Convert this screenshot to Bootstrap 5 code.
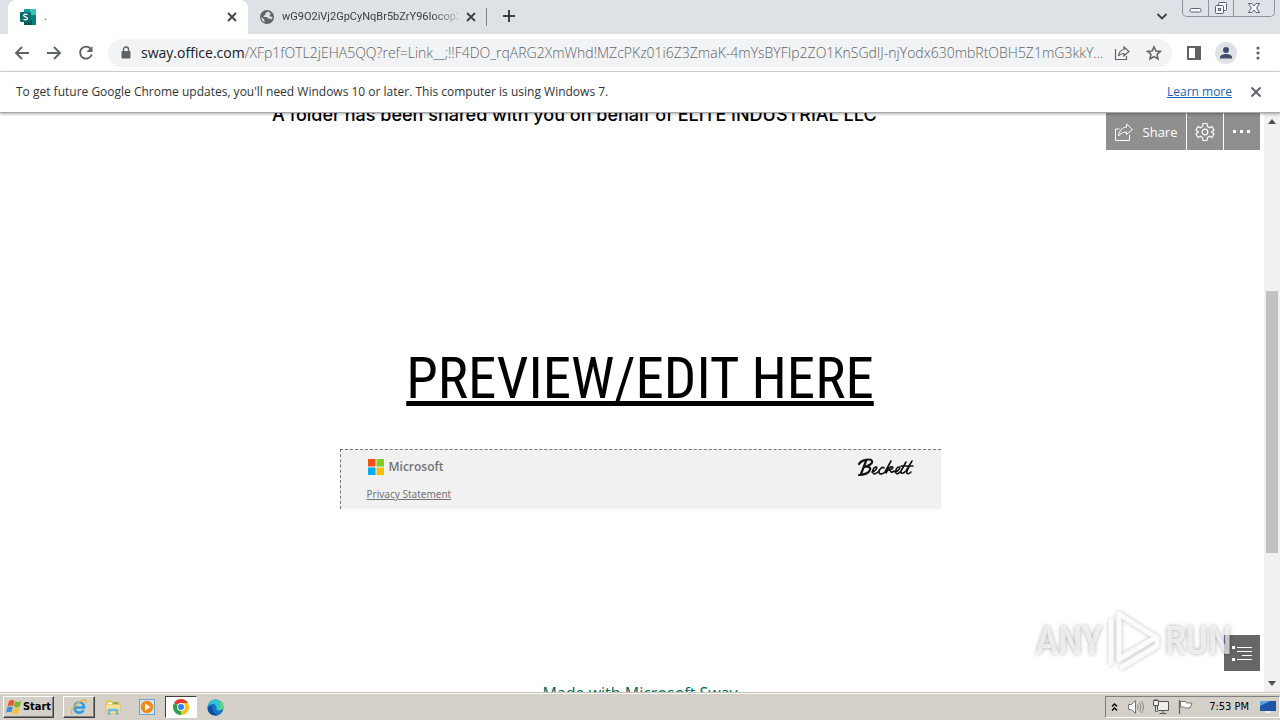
<!DOCTYPE html>
<html lang="en">
<head>
<meta charset="utf-8">
<meta name="viewport" content="width=device-width, initial-scale=1">
<title>Sway</title>
<link href="https://cdn.jsdelivr.net/npm/bootstrap@5.3.0/dist/css/bootstrap.min.css" rel="stylesheet">
<style>
  :root { --ui: "DejaVu Sans Condensed", "DejaVu Sans", sans-serif; --narrow: "Roboto Condensed", "Open Sans Condensed", Roboto, sans-serif; }
  body { font-family: "Open Sans", sans-serif; font-size: 12px; line-height: 16px; color: #222; background: #fff; }
  svg { display: block; flex: none; }
  button { font: inherit; color: inherit; }
  .plain { border: 0; background: none; padding: 0; display: flex; align-items: center; justify-content: center; flex: none; }
  /* tab strip */
  .tabstrip { height: 34px; background: #dee1e6; color: #3c4043; padding-left: 8px; }
  .tab { width: 240px; padding: 0 10px 0 12px; gap: 8px; font-family: Roboto, sans-serif; font-size: 11px; }
  .tab-on { background: #fff; border-radius: 8px 8px 0 0; }
  .tab-off { padding: 0 9px 0 11px; width: 239px; border-right: 1px solid #80868b; height: 18px; margin-top: 8px; gap: 7px; }
  .fade-name { overflow: hidden; white-space: nowrap; -webkit-mask-image: linear-gradient(90deg, #000 85%, #0003); mask-image: linear-gradient(90deg, #000 85%, #0003); }
  .tool { width: 32px; height: 32px; color: #5f6368; }
  .winbtns { height: 17px; margin-right: 5px; border: 1px solid #8d93a5; border-top: 0; border-radius: 0 0 5px 5px; overflow: hidden; }
  .winbtns button { width: 25px; }
  .winbtns button + button { border-left: 1px solid #8d93a5; }
  .winbtns button:last-child { width: 41px; }
  /* toolbar */
  .toolbar { height: 38px; padding: 0 6px; border-bottom: 1px solid #d5d7da; }
  .omnibox { height: 28px; margin: 0 6px; border-radius: 14px; background: #f1f3f4; padding: 0 2px 0 12px; font-size: 14px; }
  .omnibox label { color: #202124; margin-left: 9px; }
  .omnibox input { border: 0; background: none; padding: 0; outline: 0; color: #5f6368; font-weight: 300; min-width: 0; text-overflow: ellipsis; }
  .infobar { height: 41px; padding: 0 8px 0 16px; border-bottom: 1px solid #a8a8a8; box-shadow: 0 1px 3px #0005; position: relative; z-index: 3; background: #fff; color: #303336; font-size: 12px; }
  .infobar a { color: #1a62b8; }
  /* document */
  .stage { min-height: 0; overflow: hidden; position: relative; }
  .sheet { max-width: 736px; margin: -10px auto 0; color: #000; }
  .shared { font: 500 18px/24px Inter, sans-serif; margin: 0; }
  .cta { font: 57px/64px var(--narrow); color: #000; margin-top: 220px; text-decoration-thickness: 5px; text-underline-offset: 3px; }
  .legal { width: 601px; height: 60px; margin-top: 38px; background: #f1f1f1; border: dashed #777; border-width: 1px 0 0 1px; padding: 8px 26px; }
  .ms { font: 600 12px/18px "Open Sans", sans-serif; color: #737373; gap: 4px; }
  .privacy { font: 10px/14px "Noto Sans", sans-serif; color: #737373; margin-top: 11px; }
  .made { font: 16px/24px "Open Sans", sans-serif; color: #00695f; margin: 172px 0 0; }
  .quick { top: 0; right: 20px; gap: 1px; }
  .quick button { height: 37px; width: 36px; background: #8f8f8f; color: #fff; font: 13px/16px "Open Sans", sans-serif; }
  .quick .wide { width: 80px; gap: 10px; }
  .sb { top: 0; right: 0; bottom: 0; width: 16px; background: #f1f1f1; color: #505050; padding: 6px 0; }
  .thumb { width: 12px; height: 47%; background: #c1c1c1; }
  .toc { right: 20px; bottom: 21px; width: 36px; height: 36px; background: #666; color: #fff; }
  .mark-any { right: 48px; bottom: 19px; gap: 3px; font: 500 39px/64px var(--narrow); color: #ffffffb3; text-shadow: 0 0 4px #0005; }
  .mark-any svg { filter: drop-shadow(0 0 2px #0004); }
  /* taskbar */
  .taskbar { height: 28px; background: #d4d0c8; border-top: 1px solid #c4c0b0; box-shadow: inset 0 1px #fff; padding: 3px 0 0 3px; font-family: var(--ui); font-size: 11px; color: #000; z-index: 4; }
  .tb { width: 32px; height: 22px; }
  .raised { border: 1px solid; border-color: #fff #404040 #404040 #fff; box-shadow: inset -1px -1px #808080; }
  .sunk { border: 1px solid; border-color: #404040 #fff #fff #404040; background: #fff; }
  .start { width: 51px; height: 22px; font-weight: 700; gap: 0; margin-right: 9px; }
  .tray { height: 22px; border: 1px solid; border-color: #808080 #fff #fff #808080; padding: 0 3px 0 4px; }
</style>
</head>
<body class="vh-100 d-flex flex-column overflow-hidden">
<header class="flex-shrink-0">
  <div class="tabstrip d-flex">
    <div class="tab tab-on d-flex align-items-center">
      <svg width="16" height="16" viewBox="0 0 16 16"><path fill="#37c6b4" d="M4 0h12v6H4z"/><path fill="#1a9ba1" d="M4 0h6v8H4z"/><path fill="#0c7d83" d="M4 6h12v10H4z"/><path fill="#03545c" d="M4 11h8v5H4z"/><rect y="3" width="11" height="10" rx="1" fill="#036c70"/><path d="M7.6 5.6C6 4.8 3.700 5 3.700 6.500s3.800 1.100 3.800 2.900c0 1.500-2.500 1.700-4 .8" fill="none" stroke="#fff" stroke-width="1.300"/></svg>
      <span class="flex-grow-1">.</span>
      <button class="plain" aria-label="Close tab"><svg width="12" height="12" viewBox="0 0 12 12"><path d="m2 2 8 8m0-8-8 8" stroke="#3c4043" stroke-width="1.800"/></svg></button>
    </div>
    <div class="tab tab-off d-flex align-items-center">
      <svg width="16" height="16" viewBox="0 0 16 16"><circle cx="8" cy="8" r="7" fill="#5f6368"/><path fill="#dee1e6" d="M9 2.600 6.500 4v1.500L4.500 7v1h3.500l1 1.500h1.500l1.500 1 1.500-1.500v-1L11 7.500 10.500 6l1.500-1.500zM2.200 8l3 2.500.5 3A6 6 0 0 1 2.200 8z"/></svg>
      <span class="fade-name flex-grow-1">wG9O2iVj2GpCyNqBr5bZrY96Iocop3</span>
      <button class="plain" aria-label="Close tab"><svg width="12" height="12" viewBox="0 0 12 12"><path d="m2 2 8 8m0-8-8 8" stroke="#3c4043" stroke-width="1.800"/></svg></button>
    </div>
    <button class="plain tool ms-1" style="margin-right:auto" aria-label="New tab"><svg class="ms-1" width="12" height="12" viewBox="0 0 12 12"><path d="M6 0v12M0 6h12" stroke="#3c4043" stroke-width="2"/></svg></button>
    <button class="plain tool ms-auto me-1" aria-label="Search tabs"><svg width="12" height="12" viewBox="0 0 12 12"><path d="m1.500 4 4.500 4.500L10.500 4" fill="none" stroke="#3c4043" stroke-width="1.800"/></svg></button>
    <div class="winbtns d-flex">
      <button class="plain" aria-label="Minimize"><svg width="13" height="16"><rect x="1" y="8.500" width="11" height="3.500" rx="1.500" fill="#fff" stroke="#5b6073"/></svg></button>
      <button class="plain" aria-label="Restore"><svg width="14" height="16" viewBox="0 0 14 16" fill="#f5f6f8" stroke="#5b6073"><rect x="4.500" y="2.500" width="8" height="8" rx="1"/><rect x="1.500" y="5.500" width="8" height="8" rx="1"/><rect x="4.500" y="8.500" width="2" height="2"/></svg></button>
      <button class="plain" aria-label="Close"><svg width="14" height="16" viewBox="0 0 14 16"><path d="M1.500 3.500h3.500l2 2.500 2-2.500h3.500L9.500 8l3 4.500H9l-2-2.500-2 2.500H1.500L4.500 8z" fill="#f8f8fa" stroke="#5b6073"/></svg></button>
    </div>
  </div>
  <div class="toolbar d-flex align-items-center">
    <button class="plain tool" aria-label="Back"><svg width="16" height="16" viewBox="0 0 16 16"><path d="M15 8H2m6-6L2 8l6 6" fill="none" stroke="#5f6368" stroke-width="1.900"/></svg></button>
    <button class="plain tool" aria-label="Forward"><svg width="16" height="16" viewBox="0 0 16 16"><path d="M1 8h13M8 2l6 6-6 6" fill="none" stroke="#5f6368" stroke-width="1.900"/></svg></button>
    <button class="plain tool" aria-label="Reload"><svg width="16" height="16" viewBox="0 0 16 16"><path d="M12.600 3.600A6 6 0 1 0 13.800 9.500" fill="none" stroke="#5f6368" stroke-width="1.900"/><path d="M14.500 1v6h-6z" fill="#5f6368"/></svg></button>
    <div class="omnibox d-flex align-items-center flex-grow-1">
      <svg width="12" height="14" viewBox="0 0 12 14"><rect x="1.500" y="5" width="9" height="7.500" rx="1" fill="#5f6368"/><path d="M3.500 5V3.500a2.500 2.500 0 0 1 5 0V5" fill="none" stroke="#5f6368" stroke-width="1.400"/></svg>
      <label for="url">sway.office.com</label><input id="url" class="flex-grow-1" value="/XFp1fOTL2jEHA5QQ?ref=Link__;!!F4DO_rqARG2XmWhd!MZcPKz01i6Z3ZmaK-4mYsBYFIp2ZO1KnSGdIJ-njYodx630mbRtOBH5Z1mG3kkY...">
      <button class="plain tool" aria-label="Share this page"><svg width="16" height="16" viewBox="0 0 16 16" fill="none" stroke="#5f6368" stroke-width="1.200"><path d="M1.500 4v10.500h11V11M10 2l5 4.500L10 11V8.500c-3 0-4.500 1-5.500 2.500.3-3.500 2-6 5.500-6.500z"/></svg></button>
      <button class="plain tool" aria-label="Bookmark"><svg width="16" height="16" viewBox="0 0 16 16"><path d="m8 1.800 1.900 4.200 4.600.4L11 9.400l1 4.500-4-2.400-4 2.400 1-4.500L1.500 6.400 6.100 6z" fill="none" stroke="#5f6368" stroke-width="1.500"/></svg></button>
    </div>
    <button class="plain tool" aria-label="Side panel"><svg width="14" height="14"><rect x="1" y="1" width="12" height="12" fill="none" stroke="#5f6368" stroke-width="2"/><path d="M8 1h5v12H8z" fill="#5f6368"/></svg></button>
    <button class="plain tool" aria-label="Profile"><svg width="22" height="22" viewBox="0 0 22 22"><circle cx="11" cy="11" r="11" fill="#dee1e6"/><circle cx="11" cy="8" r="3" fill="#434b6b"/><path d="M5 16.500v-1.500c0-2 3.500-3 6-3s6 1 6 3v1.500z" fill="#434b6b"/></svg></button>
    <button class="plain tool" aria-label="Menu"><svg width="4" height="14" fill="#5f6368"><circle cx="2" cy="2" r="1.600"/><circle cx="2" cy="7" r="1.600"/><circle cx="2" cy="12" r="1.600"/></svg></button>
  </div>
  <div class="infobar d-flex align-items-center">
    <span>To get future Google Chrome updates, you'll need Windows 10 or later. This computer is using Windows 7.</span>
    <a class="ms-auto me-2" href="#">Learn more</a>
    <button class="plain tool" aria-label="Dismiss"><svg width="12" height="12" viewBox="0 0 12 12"><path d="m1.500 1.500 9 9m0-9-9 9" stroke="#5f6368" stroke-width="1.900"/></svg></button>
  </div>
</header>

<main class="stage flex-grow-1">
  <div class="sheet d-flex flex-column align-items-center">
    <p class="shared align-self-start text-nowrap">A folder has been shared with you on behalf of ELITE INDUSTRIAL LLC</p>
    <a class="cta text-nowrap" href="#">PREVIEW/EDIT HERE</a>
    <div class="legal d-flex justify-content-between align-items-start">
      <div>
        <div class="ms d-flex align-items-center"><svg width="18" height="18" viewBox="0 0 18 18"><path fill="#f1511b" d="M1 1h7.500v7.500H1z"/><path fill="#80cc28" d="M9.500 1H17v7.500H9.500z"/><path fill="#00adef" d="M1 9.500h7.500V17H1z"/><path fill="#fbbc09" d="M9.500 9.500H17V17H9.500z"/></svg>Microsoft</div>
        <a class="privacy d-block" href="#">Privacy Statement</a>
      </div>
      <svg width="58" height="20" viewBox="0 0 58 20" role="img" aria-label="Beckett" fill="none" stroke="#111" stroke-linecap="round" stroke-linejoin="round"><path stroke-width="2.200" d="M9 3 4 16M2 6C4 2 14 0 15 3c1 3-4 5-8 6 4-1 7 0 6 3-1 3-6 5-11 5"/><path stroke-width="1.600" d="M15 14c4-1 6-5 4-5s-4 3-3 6c1 2 4 0 6-2M27 10c-1-2-5 1-5 4s4 2 6 0l6-11M29 15l3-5c3-2 5-1 3 1l-3 1c2 0 1 4 5 1M38 14c4-1 6-5 4-5s-4 3-3 6c1 2 3 0 5-2l5-9M46 9l-2 4c-1 4 3 2 5 0l6-10M52 9l-2 4c-1 4 2 3 4 1M44 8h12"/></svg>
    </div>
    <p class="made text-nowrap">Made with Microsoft Sway</p>
  </div>

  <div class="quick position-absolute d-flex">
    <button class="plain wide"><svg width="18" height="18" viewBox="0 0 18 18" fill="none" stroke="#fff"><path d="M4.500 6H.5v11.500h14V12M11.500 1l6 5.500-6 5V9c-4 0-6 1.500-8 4 .5-5 3.500-8.500 8-9z"/></svg>Share</button>
    <button class="plain" aria-label="Settings"><svg width="20" height="20" viewBox="0 0 20 20" fill="none" stroke="#fff" stroke-width="1.200"><path d="m8 1.500-.5 3-2 1.200L3 4.500 1 8l2.300 2L1 12l2 3.500 2.500-1.200 2 1.200.5 3h4l.5-3 2-1.200L17 15.500l2-3.500-2.300-2L19 8l-2-3.500-2.500 1.200-2-1.200-.5-3z"/><circle cx="10" cy="10" r="2.800"/></svg></button>
    <button class="plain" aria-label="More"><svg width="18" height="3" fill="#fff"><path d="M0 0h3v3H0zM7 0h3v3H7zM14 0h3v3h-3z"/></svg></button>
  </div>

  <button class="plain toc position-absolute" aria-label="Contents"><svg width="20" height="16" viewBox="0 0 20 16" fill="#fff"><path d="M0 1h3v3H0zM0 13h3v3H0zM5 2h15v1H5zM5 6h15v1H5zM10 10h10v1H10zM5 14h15v1H5z"/></svg></button>
  <div class="mark-any position-absolute d-flex align-items-center pe-none">
    <span>ANY</span>
    <svg width="56" height="64" viewBox="0 0 56 64" fill="none" stroke="#fff" stroke-opacity=".9" stroke-width="5" stroke-linejoin="round" stroke-linecap="round"><path d="M5 12v42M13 48V5l38 24M13 50l34-20M16 58l35-21v-8"/></svg>
    <span>RUN</span>
  </div>
  <div class="sb position-absolute d-flex flex-column align-items-center">
    <svg width="8" height="5"><path d="M0 5h8L4 0z" fill="#505050"/></svg>
    <div class="flex-grow-1 d-flex flex-column justify-content-start align-items-center w-100">
      <div style="height:30%"></div><div class="thumb"></div>
    </div>
    <svg width="8" height="5"><path d="M0 0h8L4 5z" fill="#505050"/></svg>
  </div>
</main>

<footer class="taskbar d-flex flex-shrink-0 align-items-start">
  <button class="plain raised start"><svg width="17" height="16" viewBox="0 0 17 16"><path fill="#e8562a" d="M3 2c2-1.500 4-1.200 5.500-.3L7 7.200C5.300 6.300 3.500 6.300 1.500 7.500z"/><path fill="#7db72f" d="M9.300 2.200c2 1 3.500 1 6-.3L13.800 7.500c-2 1.200-4 1.200-6 .2z"/><path fill="#3b8ede" d="M1.200 8.500c2-1.200 4-1.200 5.600-.3L5.300 13.500c-1.600-1-3.500-1-5.300.2z"/><path fill="#fbc02d" d="M7.500 8.700c2 1 4 1 6-.2L12 14c-2 1.200-4 1.200-6 .2z"/></svg>Start</button>
  <div class="d-flex" style="gap:2px">
    <button class="plain tb raised" aria-label="Internet Explorer"><svg width="18" height="18" viewBox="0 0 18 18" fill="none"><path d="M4.500 9.500h9.500c0-7-9.500-7-9.500 0 0 6 7 6.500 9 2.500" stroke="#2f9be8" stroke-width="2.600"/><path d="M2 16C-1 13 8 2.500 14.500 2c2 0 2 1.500 1 3.500" stroke="#eab93c" stroke-width="1.400"/></svg></button>
    <button class="plain tb" aria-label="Explorer"><svg width="18" height="18" viewBox="0 0 18 18"><path fill="#e5c565" d="M2 2h5l1 1.500h8V14H2z"/><path fill="#7fb85a" d="M9 4h5v2H9z"/><path fill="#fff" d="M4 4.500h4v3H4z"/><path fill="#f6e29a" stroke="#d9b95c" stroke-width=".6" d="M1.500 6.500h15l-.5 9H2.500z"/><path d="M5 17v-5h8v5" fill="none" stroke="#6db9df" stroke-width="2.400"/></svg></button>
    <button class="plain tb" aria-label="Media Player"><svg width="18" height="18" viewBox="0 0 18 18"><rect x="1.500" y="1.500" width="15" height="15" fill="#cfe6f5" stroke="#6ea3c8"/><circle cx="9" cy="9" r="6.200" fill="#f08a14"/><path d="m7 5.500 5.500 3.500L7 12.500z" fill="#fff"/></svg></button>
    <button class="plain tb sunk" aria-label="Chrome"><svg width="16" height="16" viewBox="0 0 16 16"><path fill="#e33b2e" d="M8 8 1.070 4a8 8 0 0 1 13.860 0z"/><path fill="#f9c31f" d="M8 8V4h6.930A8 8 0 0 1 8 16z"/><path fill="#2f9e49" d="M8 8v8A8 8 0 0 1 1.070 4z"/><path fill="#f9c31f" d="M11.500 10 8 16a8 8 0 0 0 3-1z"/><circle cx="8" cy="8" r="4" fill="#fff"/><circle cx="8" cy="8" r="3" fill="#3b7ded"/></svg></button>
    <button class="plain tb" aria-label="Edge"><svg width="17" height="17" viewBox="0 0 17 17"><circle cx="8.500" cy="8.500" r="8" fill="#1473c4"/><path fill="#35c3d3" d="M.6 8C1 3.500 4.500.5 8.500.5c5 0 8 3.500 8 6.500s-2.500 4.500-5 4.500c-2 0-2.500-1-2-2C10 7 8 5 5.500 5 3 5 1.200 6.500.6 8z"/><path fill="#66d56c" d="M12 1.500c3 1.300 4.500 3.500 4.500 5.500s-1.500 4.500-5 4.500c2.500-3 2.500-7 .5-10z"/><path fill="#0c4f9f" d="M5.500 8c-1 4 2 7.500 6 8-6 2-11-2-11-7C2 7 4 7 5.500 8z"/></svg></button>
  </div>
  <div class="tray d-flex align-items-center ms-auto">
    <svg width="9" height="12" viewBox="0 0 9 12"><path d="m2 5.500 2.500-2.500L7 5.500M2 9.500 4.500 7 7 9.500" fill="none" stroke="#000" stroke-width="1.400"/></svg>
    <svg class="ms-2" width="18" height="16" viewBox="0 0 18 16"><path d="M1.500 5.500h3l4-4v13l-4-4h-3z" fill="#fff" stroke="#777"/><path d="M10.500 5.500q1.500 2.500 0 5M12.500 3.500q3 4.500 0 9M14.500 2q4 6 0 12" fill="none" stroke="#888"/></svg>
    <svg class="ms-2" width="16" height="16" viewBox="0 0 16 16" fill="#eee" stroke="#555"><path d="M4.500 2.500h11v9h-11z"/><path d="M6.500 14.500h7M10 11.500v3M.5 1.500h5v5h-5zM2 0v1.500M4 0v1.500M2.500 6.500v6h2"/></svg>
    <svg class="ms-2" width="16" height="16" viewBox="0 0 16 16"><path d="M2.500 1v14" stroke="#666" stroke-width="1.300"/><path d="M3.500 2.500h5l1 1.500h5.500l-2 5H8.500L7.500 8h-4z" fill="#fff" stroke="#777"/></svg>
    <span class="ms-3 text-nowrap">7:53 PM</span>
    <svg style="margin-left:11px" width="16" height="14" viewBox="0 0 16 14"><path fill="#1d56a8" d="M0 1h16v10H0z"/><path fill="#5da0e6" d="M0 1h10L0 6z"/><path fill="#e8eef5" d="M5 11h6v2H5z"/></svg>
  </div>
</footer>
<script src="https://cdn.jsdelivr.net/npm/bootstrap@5.3.0/dist/js/bootstrap.bundle.min.js"></script>
</body>
</html>
